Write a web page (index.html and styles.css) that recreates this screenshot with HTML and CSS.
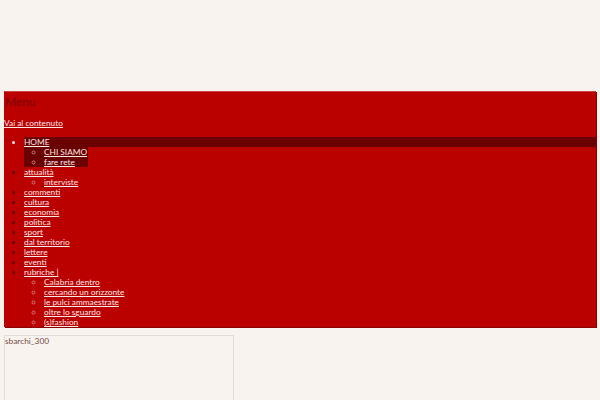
FILE: index.html
```html
<!DOCTYPE html>
<html lang="it">
<head>
<meta charset="utf-8">
<title>Menu</title>
<link rel="stylesheet" href="styles.css">
</head>
<body>
<div class="page">
  <div class="header"></div>
  <nav class="access">
    <h3 class="menu-title">Menu</h3>
    <div class="skip"><a href="#content">Vai al contenuto</a></div>
    <ul class="menu">
      <li class="current"><a href="#">HOME</a>
        <ul class="sub sub-dark">
          <li><a href="#">CHI SIAMO</a></li>
          <li><a href="#">fare rete</a></li>
        </ul>
      </li>
      <li><a href="#">attualità</a>
        <ul class="sub">
          <li><a href="#">interviste</a></li>
        </ul>
      </li>
      <li><a href="#">commenti</a></li>
      <li><a href="#">cultura</a></li>
      <li><a href="#">economia</a></li>
      <li><a href="#">politica</a></li>
      <li><a href="#">sport</a></li>
      <li><a href="#">dal territorio</a></li>
      <li><a href="#">lettere</a></li>
      <li><a href="#">eventi</a></li>
      <li><a href="#">rubriche |</a>
        <ul class="sub">
          <li><a href="#">Calabria dentro</a></li>
          <li><a href="#">cercando un orizzonte</a></li>
          <li><a href="#">le pulci ammaestrate</a></li>
          <li><a href="#">oltre lo sguardo</a></li>
          <li><a href="#">(s)fashion</a></li>
        </ul>
      </li>
    </ul>
  </nav>
  <div class="image-box">sbarchi_300</div>
</div>
</body>
</html>
```
FILE: styles.css
```css
html, body {
  margin: 0;
  padding: 0;
  background: #f8f3ee;
}
body {
  font-family: Lato, "Open Sans", sans-serif;
  font-size: 8.3px;
  line-height: 10px;
}
.page {
  padding: 0 4px;
}
.header {
  height: 91px;
}
.access {
  background: #bb0000;
  border-top: 1px solid #cc4444;
  box-shadow: 1px 1px 0 #8a0000;
}
.menu-title {
  margin: 0;
  padding: 3px 0 0 1px;
  height: 23px;
  font-weight: normal;
  font-size: 12px;
  line-height: 14px;
  color: #7a0000;
}
.skip {
  height: 19px;
  line-height: 10px;
}
.skip a {
  color: #fbe6e6;
}
.menu {
  margin: 0;
  padding: 0 0 0 20px;
  list-style: disc;
  color: #660000;
}
.menu a {
  color: #fbe6e6;
}
.menu .current {
  color: #fbe6e6;
}
.menu .current > a {
  display: block;
  background: #6a0000;
}
.sub {
  margin: 0;
  padding: 0 0 0 20px;
  list-style: circle;
  color: #d07a7a;
}
.sub-dark {
  display: inline-block;
  background: #6a0000;
  padding-right: 1px;
  vertical-align: top;
}
.image-box {
  margin-top: 8px;
  width: 228px;
  height: 80px;
  border: 1px solid #e0dcd6;
  color: #7a4a4a;
  font-size: 8.3px;
  line-height: 10px;
}
```
